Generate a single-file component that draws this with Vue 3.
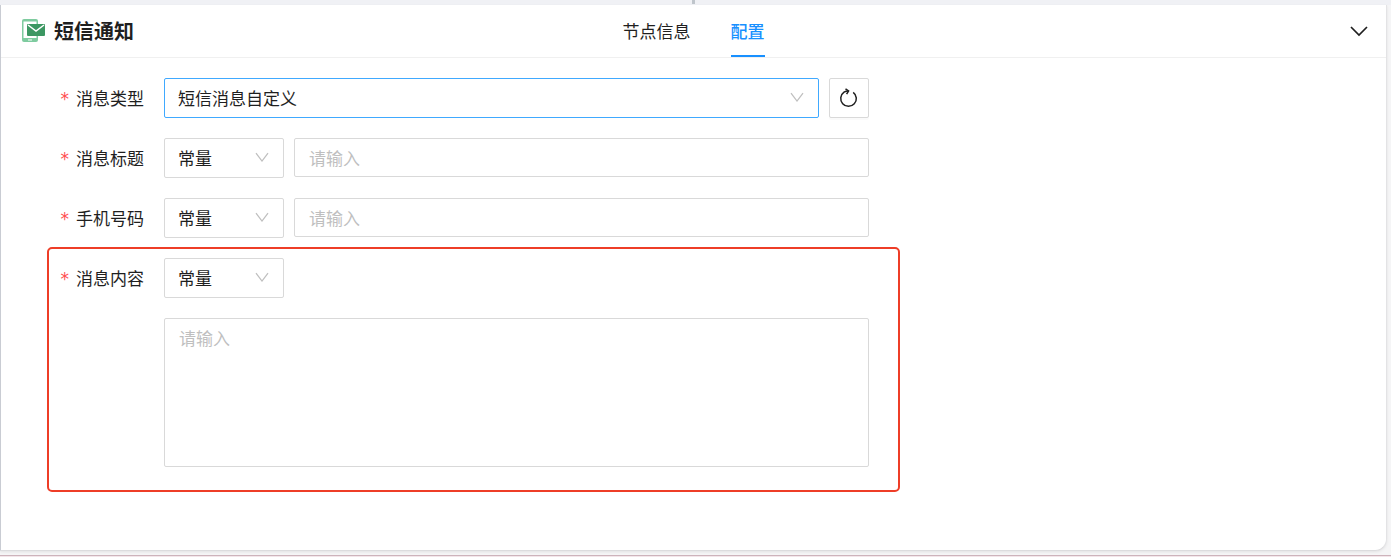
<script setup>
import { reactive, ref } from 'vue'

const activeTab = ref('config')
const tabs = [
  { key: 'info', label: '节点信息' },
  { key: 'config', label: '配置' },
]
const form = reactive({
  type: '短信消息自定义',
  title: '',
  phone: '',
  content: '',
  titleMode: '常量',
  phoneMode: '常量',
  contentMode: '常量',
})
const rows = [
  { key: 'title', label: '消息标题' },
  { key: 'phone', label: '手机号码' },
]
</script>

<template>
  <div class="page">
    <div class="splitter"><span class="handle"></span></div>
    <main class="panel">
      <header class="head">
        <div class="brand">
          <svg class="logo" viewBox="0 0 24 24" aria-hidden="true">
            <path fill="#7ecb9f" fill-rule="evenodd" d="M2 0h12a2 2 0 0 1 2 2v19a2 2 0 0 1-2 2H2a2 2 0 0 1-2-2V2a2 2 0 0 1 2-2zM1.500 2.500v16.500h13V2.500zM6 20.500v1h4v-1z" />
            <rect x="5" y="5" width="18" height="12" rx="1" fill="#3c9762" />
            <path d="M6 6l8 6 8-6" fill="none" stroke="#fff" stroke-width="1.500" />
          </svg>
          <h1>短信通知</h1>
        </div>
        <nav class="tabs">
          <button
            v-for="tab in tabs"
            :key="tab.key"
            type="button"
            class="tab"
            :class="{ active: activeTab === tab.key }"
            @click="activeTab = tab.key"
          >{{ tab.label }}</button>
        </nav>
        <button type="button" class="collapse" aria-label="收起">
          <svg viewBox="0 0 20 12" width="20" height="12"><path d="M2 2l8 8 8-8" fill="none" stroke="#1f1f1f" stroke-width="1.700" /></svg>
        </button>
      </header>

      <form class="form" @submit.prevent>
        <div class="row">
          <label class="label" for="type">消息类型</label>
          <div class="select focused">
            <select id="type" v-model="form.type"><option>短信消息自定义</option></select>
            <svg class="arrow" viewBox="0 0 14 10"><path d="M1 1l6 8 6-8" /></svg>
          </div>
          <button type="button" class="refresh" aria-label="刷新">
            <svg viewBox="0 0 20 20" width="20" height="20" fill="none" stroke="#1f1f1f" stroke-width="1.500">
              <path d="M14.200 4.300A7.800 7.800 0 1 1 5 4.200Q7 2.900 9.200 2.900" />
              <path d="M6.500 0.800L9.600 2.900 7.600 6.200" />
            </svg>
          </button>
        </div>

        <div v-for="row in rows" :key="row.key" class="row">
          <label class="label" :for="row.key">{{ row.label }}</label>
          <div class="select mode">
            <select v-model="form[row.key + 'Mode']" :aria-label="row.label + '类型'"><option>常量</option></select>
            <svg class="arrow" viewBox="0 0 14 10"><path d="M1 1l6 8 6-8" /></svg>
          </div>
          <input :id="row.key" v-model="form[row.key]" class="input" type="text" placeholder="请输入" />
        </div>

        <div class="content-group">
          <div class="row">
            <label class="label" for="content">消息内容</label>
            <div class="select mode">
              <select v-model="form.contentMode" aria-label="消息内容类型"><option>常量</option></select>
              <svg class="arrow" viewBox="0 0 14 10"><path d="M1 1l6 8 6-8" /></svg>
            </div>
          </div>
          <textarea id="content" v-model="form.content" class="area" placeholder="请输入"></textarea>
        </div>
      </form>
    </main>
    <div class="bottom-line"></div>
  </div>
</template>

<style>
body {
  margin: 0;
}
</style>

<style scoped>
.page,
.page * {
  box-sizing: border-box;
}
.page {
  display: flex;
  flex-direction: column;
  min-height: 100vh;
  background: #f5f5f6;
  color: #1f1f1f;
  font-family: "Noto Sans CJK SC", sans-serif;
  font-size: 17px;
  line-height: 26px;
}
button,
input,
select,
textarea {
  font: inherit;
  color: inherit;
  margin: 0;
}
.splitter {
  display: flex;
  justify-content: center;
  height: 5px;
  padding-right: 4px;
  background: #f0f1f5;
}
.handle {
  width: 3px;
  height: 4px;
  background: #bfc5cb;
}
.panel {
  flex: 1;
  margin-right: 4px;
  background: #fff;
  border-left: 1px solid #c9ccd3;
  border-right: 1px solid #e3e3e5;
  border-bottom: 1px solid #dcdcde;
  border-bottom-right-radius: 12px;
  box-shadow: 0 1px 3px rgba(0, 0, 0, 0.08);
}
.head {
  display: grid;
  grid-template-columns: 1fr auto 1fr;
  align-items: center;
  height: 53px;
  padding: 0 17px 0 21px;
  border-bottom: 1px solid #f0f0f0;
}
.brand {
  display: flex;
  align-items: center;
  gap: 8px;
}
.logo {
  width: 24px;
  height: 24px;
}
h1 {
  margin: 0;
  font-size: 20px;
  line-height: 28px;
  font-weight: 700;
}
.tabs {
  display: flex;
  gap: 40px;
  height: 52px;
  padding-right: 4px;
}
.tab {
  height: 52px;
  padding: 2px 0 0;
  border: 0;
  border-bottom: 2px solid transparent;
  background: none;
}
.tab.active {
  color: #1890ff;
  border-bottom-color: #1890ff;
  font-weight: 500;
}
.collapse {
  justify-self: end;
  display: flex;
  padding: 0;
  border: 0;
  background: none;
}
.form {
  display: flex;
  flex-direction: column;
  gap: 20px;
  max-width: 868px;
  padding: 20px 0;
}
.row {
  display: flex;
  gap: 10px;
  height: 40px;
}
.label {
  display: flex;
  align-items: center;
  justify-content: flex-end;
  gap: 7px;
  width: 143px;
  margin-right: 10px;
  flex: none;
}
.label::before {
  content: "*";
  color: #ff4d4f;
  font-family: "DejaVu Sans", sans-serif;
  height: 24px;
}
.select {
  position: relative;
  flex: 1;
  min-width: 0;
  border: 1px solid #d9d9d9;
  border-radius: 2px;
}
.select.focused {
  border-color: #40a9ff;
}
.select.mode {
  flex: 0 0 120px;
}
select {
  display: block;
  width: 100%;
  height: 38px;
  padding: 0 36px 0 13px;
  border: 0;
  outline: 0;
  background: none;
  appearance: none;
}
.arrow {
  position: absolute;
  right: 14px;
  top: 13px;
  width: 14px;
  height: 10px;
  fill: none;
  stroke: #bfbfbf;
  stroke-width: 1.25;
  pointer-events: none;
}
.refresh {
  display: flex;
  align-items: center;
  justify-content: center;
  width: 40px;
  padding: 0;
  border: 1px solid #d9d9d9;
  border-radius: 2px;
  background: #fff;
  box-shadow: 0 2px 0 rgba(0, 0, 0, 0.02);
}
.input {
  flex: 1;
  min-width: 0;
  height: 39px;
  padding: 0 14px;
  border: 1px solid #d9d9d9;
  border-radius: 2px;
  outline: 0;
}
.input::placeholder,
.area::placeholder {
  color: #bfbfbf;
}
.content-group {
  position: relative;
  display: flex;
  flex-direction: column;
  gap: 20px;
}
.content-group::after {
  content: "";
  position: absolute;
  inset: -11px -31px -25px 46px;
  border: 2px solid #ee3d27;
  border-radius: 5px;
  pointer-events: none;
}
.area {
  height: 149px;
  margin-left: 163px;
  padding: 6px 14px;
  border: 1px solid #d9d9d9;
  border-radius: 2px;
  outline: 0;
  resize: none;
}
.bottom-line {
  height: 2px;
  margin-top: 4px;
  background: #f3e6ea;
  border-top: 1px solid #cdb3bb;
}
</style>
